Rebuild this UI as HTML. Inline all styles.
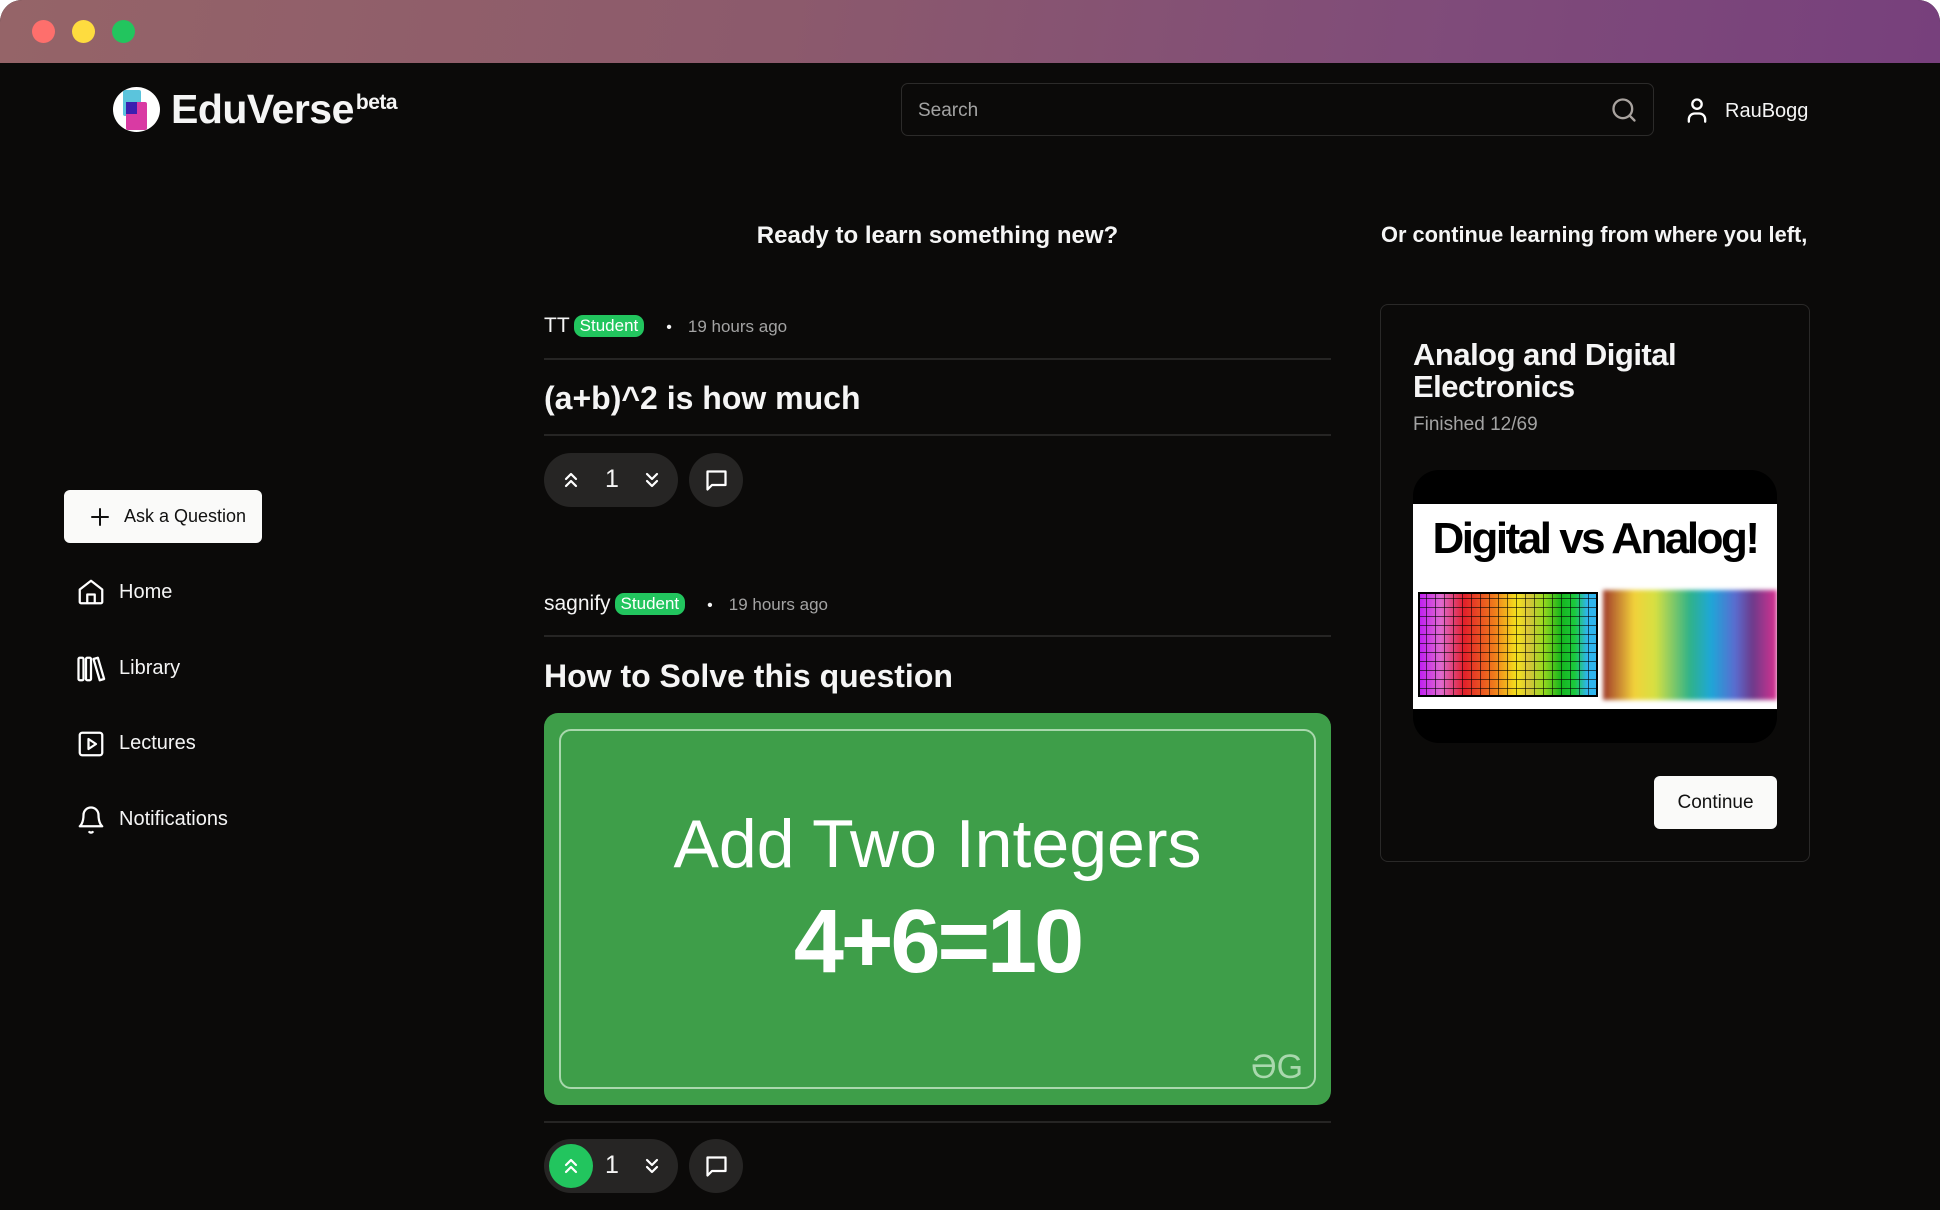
<!DOCTYPE html>
<html><head><meta charset="utf-8"><style>
*{margin:0;padding:0;box-sizing:border-box}
body{width:1940px;height:1210px;background:#fff;font-family:"Liberation Sans",sans-serif;overflow:hidden;position:relative}
.win{position:absolute;left:0;top:0;width:1940px;height:1210px;border-radius:22px 22px 0 0;overflow:hidden;background:#0b0a09}
.bar{position:absolute;left:0;top:0;width:1940px;height:63px;background:linear-gradient(100deg,#956468 0%,#8c5a6c 40%,#7f4b7a 75%,#77407c 100%)}
.dot{position:absolute;top:20px;width:23px;height:23px;border-radius:50%}
.a{position:absolute;color:#f5f5f5;white-space:nowrap}
.sep{position:absolute;left:544px;width:787px;height:2px;background:#262524}
.pill{position:absolute;left:544px;width:134px;height:54px;border-radius:27px;background:#262524}
.circ{position:absolute;left:689px;width:54px;height:54px;border-radius:50%;background:#262524}
.badge{display:inline-block;background:#22c55e;color:#fff;border-radius:9px;padding:1px 6px;font-size:17px;vertical-align:1px;margin-left:4px}
.nav svg{position:absolute}
</style></head><body>
<div class="win">
<div class="bar"></div>
<div class="dot" style="left:32px;background:#fe6f6c"></div>
<div class="dot" style="left:72px;background:#fedc3f"></div>
<div class="dot" style="left:112px;background:#22c55e"></div>

<div style="position:absolute;left:113px;top:87px;width:47px;height:45px;border-radius:50%;background:#fff;overflow:hidden">
 <div style="position:absolute;left:10px;top:3px;width:18px;height:26px;background:#5bc4dc;border-radius:2px"></div>
 <div style="position:absolute;left:13px;top:15px;width:21px;height:28px;background:#d93aa3;border-radius:2px"></div>
 <div style="position:absolute;left:13px;top:15px;width:11px;height:12px;background:#3b1fb0"></div>
</div>
<div class="a" style="left:171px;top:86px;font-size:41px;font-weight:bold;letter-spacing:-0.5px">EduVerse<span style="font-size:21px;vertical-align:14px;margin-left:2px">beta</span></div>

<div style="position:absolute;left:901px;top:83px;width:753px;height:53px;border:1px solid #2c2b2a;border-radius:7px"></div>
<div class="a" style="left:918px;top:100px;font-size:19px;color:#a3a3a3">Search</div>
<svg style="position:absolute;left:1610px;top:96px" width="28" height="28" viewBox="0 0 24 24" fill="none" stroke="#a8a29e" stroke-width="2" stroke-linecap="round"><circle cx="11" cy="11" r="8"/><path d="M21 21l-4.3-4.3"/></svg>
<svg style="position:absolute;left:1683px;top:95px" width="28" height="30" viewBox="0 0 24 24" fill="none" stroke="#fff" stroke-width="2" stroke-linecap="round"><circle cx="12" cy="7" r="4"/><path d="M5 22v-2a5 5 0 0 1 5-5h4a5 5 0 0 1 5 5v2"/></svg>
<div class="a" style="left:1725px;top:100px;font-size:20px">RauBogg</div>

<div style="position:absolute;left:64px;top:490px;width:198px;height:53px;background:#fafaf9;border-radius:6px"></div>
<svg style="position:absolute;left:88px;top:505px" width="24" height="24" viewBox="0 0 24 24" stroke="#111" stroke-width="2" stroke-linecap="round"><path d="M12 4v16M4 12h16"/></svg>
<div class="a" style="left:124px;top:506px;font-size:18px;color:#111">Ask a Question</div>
<div class="nav">
<svg style="left:76px;top:576px" width="30" height="32" viewBox="0 0 24 24" fill="none" stroke="#fff" stroke-width="1.8" stroke-linejoin="round"><path d="M3 10l9-7 9 7v10a1 1 0 0 1-1 1H4a1 1 0 0 1-1-1z"/><path d="M9 21v-7h6v7"/></svg>
<svg style="left:76px;top:653px" width="30" height="32" viewBox="0 0 24 24" fill="none" stroke="#fff" stroke-width="1.8" stroke-linejoin="round"><rect x="2" y="3" width="4" height="18" rx="1"/><rect x="8" y="3" width="4" height="18" rx="1"/><path d="M14 4l3.5-1 5 17-3.5 1z"/></svg>
<svg style="left:76px;top:728px" width="30" height="32" viewBox="0 0 24 24" fill="none" stroke="#fff" stroke-width="1.8" stroke-linejoin="round"><rect x="3" y="3" width="18" height="18" rx="2"/><path d="M10 8l6 4-6 4z"/></svg>
<svg style="left:76px;top:803px" width="30" height="34" viewBox="0 0 24 26" fill="none" stroke="#fff" stroke-width="1.8" stroke-linejoin="round"><path d="M6 9a6 6 0 0 1 12 0c0 7 3 9 3 9H3s3-2 3-9"/><path d="M10.3 22a1.9 1.9 0 0 0 3.4 0"/></svg>
</div>
<div class="a" style="left:119px;top:581px;font-size:20px">Home</div>
<div class="a" style="left:119px;top:657px;font-size:20px">Library</div>
<div class="a" style="left:119px;top:732px;font-size:20px">Lectures</div>
<div class="a" style="left:119px;top:808px;font-size:20px">Notifications</div>

<div class="a" style="left:544px;width:787px;text-align:center;top:222px;font-size:24px;font-weight:bold">Ready to learn something new?</div>

<div class="a" style="left:544px;top:314px;font-size:21px">TT<span class="badge">Student</span><span style="margin:0 16px 0 22px;font-size:16px">•</span><span style="color:#a3a3a3;font-size:17px">19 hours ago</span></div>
<div class="sep" style="top:358px"></div>
<div class="a" style="left:544px;top:380px;font-size:32px;font-weight:bold">(a+b)^2 is how much</div>
<div class="sep" style="top:434px"></div>
<div class="pill" style="top:453px"></div>
<div class="circ" style="top:453px"></div>

<div class="a" style="left:544px;top:592px;font-size:21px">sagnify<span class="badge">Student</span><span style="margin:0 16px 0 22px;font-size:16px">•</span><span style="color:#a3a3a3;font-size:17px">19 hours ago</span></div>
<div class="sep" style="top:635px"></div>
<div class="a" style="left:544px;top:658px;font-size:32px;font-weight:bold">How to Solve this question</div>
<div style="position:absolute;left:544px;top:713px;width:787px;height:392px;border-radius:14px;background:#3e9e49;overflow:hidden">
 <div style="position:absolute;left:15px;top:16px;right:15px;bottom:16px;border:2px solid #a9d8ad;border-radius:12px"></div>
 <div class="a" style="left:0;width:787px;text-align:center;top:92px;font-size:68px;font-weight:300;color:#fff">Add Two Integers</div>
 <div class="a" style="left:0;width:787px;text-align:center;top:178px;font-size:90px;font-weight:bold;color:#fff;letter-spacing:-3px">4+6=10</div>
 <div class="a" style="left:707px;top:335px;font-size:34px;color:#a9d8ad">ƏG</div>
</div>
<div class="sep" style="top:1121px"></div>
<div class="pill" style="top:1139px"></div>
<div class="circ" style="top:1139px"></div>
<div style="position:absolute;left:549px;top:1144px;width:44px;height:44px;border-radius:50%;background:#22c55e"></div>

<svg style="position:absolute;left:561px;top:468px" width="20" height="24" viewBox="0 0 20 24" fill="none" stroke="#fff" stroke-width="2.2" stroke-linecap="round" stroke-linejoin="round"><path d="M5 11l5-5 5 5M5 18l5-5 5 5"/></svg>
<div class="a" style="left:605px;top:465px;font-size:25px">1</div>
<svg style="position:absolute;left:642px;top:468px" width="20" height="24" viewBox="0 0 20 24" fill="none" stroke="#fff" stroke-width="2.2" stroke-linecap="round" stroke-linejoin="round"><path d="M5 6l5 5 5-5M5 13l5 5 5-5"/></svg>
<svg style="position:absolute;left:703px;top:467px" width="27" height="27" viewBox="0 0 24 24" fill="none" stroke="#fff" stroke-width="2" stroke-linejoin="round"><path d="M4 4h16v12H8l-4 4z"/></svg>

<svg style="position:absolute;left:561px;top:1154px" width="20" height="24" viewBox="0 0 20 24" fill="none" stroke="#fff" stroke-width="2.2" stroke-linecap="round" stroke-linejoin="round"><path d="M5 11l5-5 5 5M5 18l5-5 5 5"/></svg>
<div class="a" style="left:605px;top:1151px;font-size:25px">1</div>
<svg style="position:absolute;left:642px;top:1154px" width="20" height="24" viewBox="0 0 20 24" fill="none" stroke="#fff" stroke-width="2.2" stroke-linecap="round" stroke-linejoin="round"><path d="M5 6l5 5 5-5M5 13l5 5 5-5"/></svg>
<svg style="position:absolute;left:703px;top:1153px" width="27" height="27" viewBox="0 0 24 24" fill="none" stroke="#fff" stroke-width="2" stroke-linejoin="round"><path d="M4 4h16v12H8l-4 4z"/></svg>

<div class="a" style="left:1381px;top:222px;font-size:21.8px;font-weight:bold">Or continue learning from where you left,</div>
<div style="position:absolute;left:1380px;top:304px;width:430px;height:558px;border:1px solid #2a2928;border-radius:8px"></div>
<div class="a" style="left:1413px;top:339px;font-size:31px;font-weight:bold;line-height:32px;letter-spacing:-0.5px">Analog and Digital<br>Electronics</div>
<div class="a" style="left:1413px;top:414px;font-size:19px;color:#a3a3a3">Finished 12/69</div>
<div style="position:absolute;left:1413px;top:470px;width:364px;height:273px;border-radius:26px;background:#000;overflow:hidden">
 <div style="position:absolute;left:0;top:34px;width:364px;height:205px;background:#fff">
  <div class="a" style="left:0;width:364px;text-align:center;top:10px;font-size:44px;font-weight:bold;color:#000;letter-spacing:-2.5px">Digital vs Analog!</div>
  <div style="position:absolute;left:5px;top:88px;width:180px;height:105px;background:linear-gradient(90deg,#c020f0,#e06acf 12%,#e21f2a 25%,#f07a1b 42%,#f5e31d 55%,#d6c43a 62%,#9ada1e 70%,#16b51c 80%,#1bc93d 88%,#2fb5ee 95%);border:2px solid #000"></div>
  <div style="position:absolute;left:5px;top:88px;width:180px;height:105px;background:repeating-linear-gradient(90deg,transparent 0 8px,rgba(0,0,0,.6) 8px 9px),repeating-linear-gradient(0deg,transparent 0 8px,rgba(0,0,0,.6) 8px 9px)"></div>
  <div style="position:absolute;left:190px;top:86px;width:174px;height:110px;background:linear-gradient(90deg,#a03a2a,#f2d23a 18%,#d6e042 30%,#2fb28a 50%,#1ea7d8 62%,#5a6ccf 76%,#6d3a8a 86%,#d8318f 100%);filter:blur(2px)"></div>
 </div>
</div>
<div style="position:absolute;left:1654px;top:776px;width:123px;height:53px;background:#fafaf9;border-radius:6px"></div>
<div class="a" style="left:1654px;width:123px;text-align:center;top:792px;font-size:19px;color:#111">Continue</div>
</div>
</body></html>
